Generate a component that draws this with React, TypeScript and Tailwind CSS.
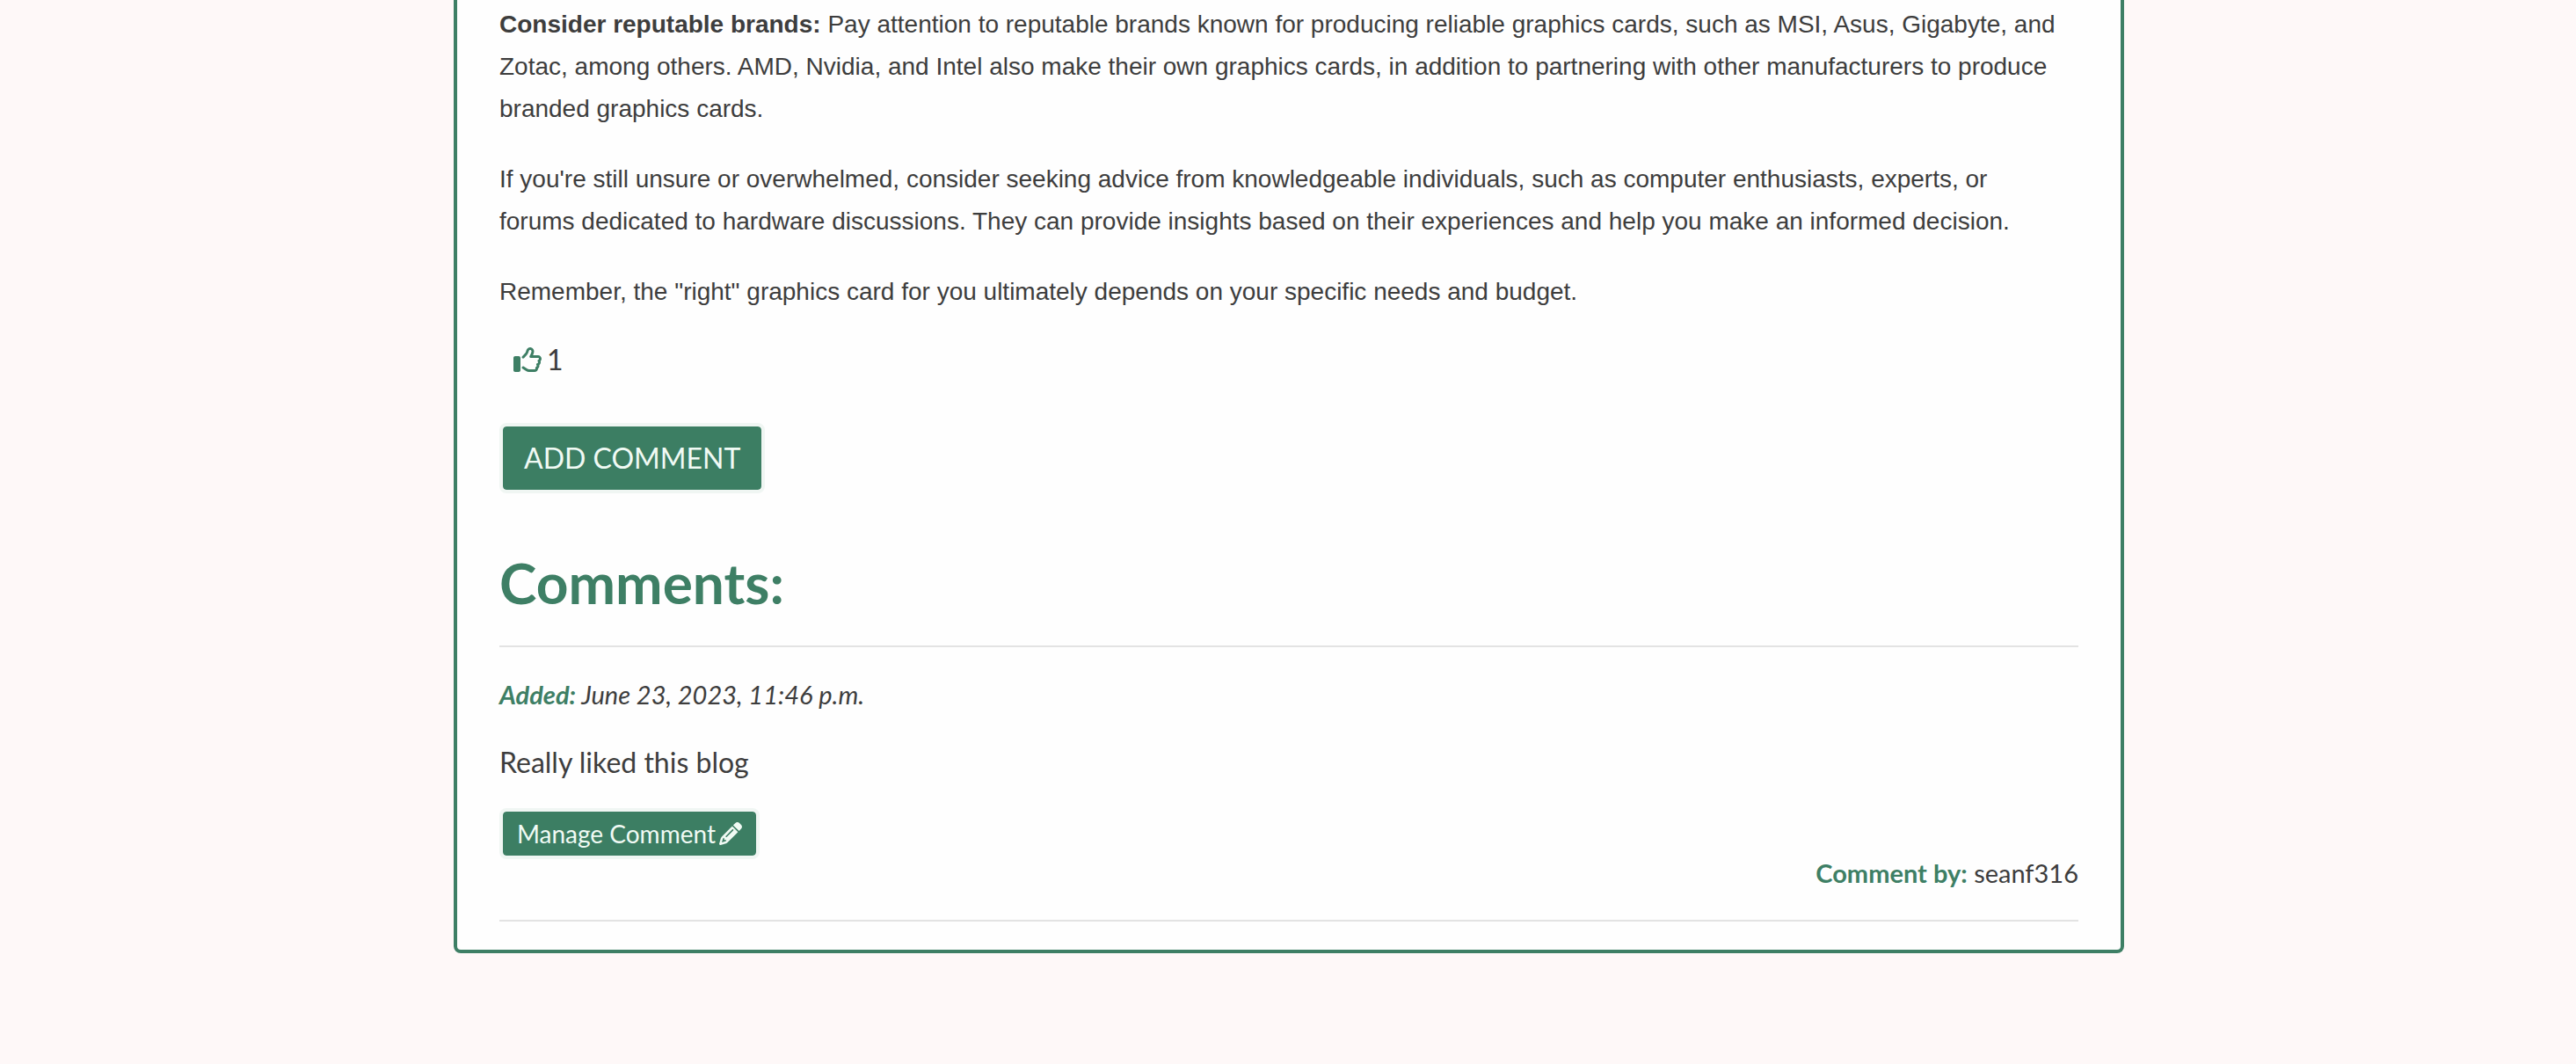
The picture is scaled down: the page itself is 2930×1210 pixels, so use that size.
import { FaPencil, FaRegThumbsUp } from "react-icons/fa6";

function Rule() {
  return <hr className="h-0 border-0 border-t-2 border-solid border-[#e3e3e3]" />;
}

function Article() {
  return (
    <div className="flex flex-col gap-8 font-['Liberation_Sans',Arial,sans-serif] text-[28px] leading-[48px]">
      <p>
        <strong className="font-bold">Consider reputable brands:</strong> Pay attention to reputable
        brands known for producing reliable graphics cards, such as MSI, Asus, Gigabyte, and Zotac,
        among others. AMD, Nvidia, and Intel also make their own graphics cards, in addition to
        partnering with other manufacturers to produce branded graphics cards.
      </p>
      <p>
        If you're still unsure or overwhelmed, consider seeking advice from knowledgeable
        individuals, such as computer enthusiasts, experts, or
        <br />
        forums dedicated to hardware discussions. They can provide insights based on their
        experiences and help you make an informed decision.
      </p>
      <p>Remember, the "right" graphics card for you ultimately depends on your specific needs and budget.</p>
    </div>
  );
}

function Comment() {
  return (
    <article className="flex flex-col items-start">
      <p className="mt-8 text-[29px] leading-[43px] italic">
        <strong className="font-bold text-[#3e7f65]">Added:</strong> June 23, 2023, 11:46 p.m.
      </p>
      <p className="mt-8 text-[32px] leading-[48px]">Really liked this blog</p>
      <button
        type="button"
        className="mt-7 flex items-center gap-1 rounded-lg border-4 border-[#f0f6f3] bg-[#3c7e63] bg-clip-padding px-4 py-1 text-[28px] leading-[42px] text-[#f0faf4]"
      >
        Manage Comment
        <FaPencil aria-hidden="true" className="size-[26px]" />
      </button>
      <p className="-mt-1.5 self-end text-[29px] leading-[43px]">
        <strong className="font-bold text-[#3e7f65]">Comment by:</strong> seanf316
      </p>
    </article>
  );
}

export default function App() {
  return (
    <main className="min-h-screen bg-[#fef8f8] pl-0.5 font-[Lato,sans-serif] text-[#3d3d3d]">
      <section className="mx-auto w-full max-w-[1900px] rounded-b-lg border-4 border-t-0 border-[#3e7f65] bg-[#fefefe] px-12 pt-1 pb-8">
        <Article />
        <div className="mt-[29px] flex px-4">
          <button type="button" aria-label="Like, 1 like" className="flex items-center gap-1.5 text-[32px] leading-[48px]">
            <FaRegThumbsUp aria-hidden="true" className="size-8 text-[#3e7f65]" />1
          </button>
        </div>
        <button
          type="button"
          className="mt-12 block rounded-lg border-4 border-[#f0f6f3] bg-[#3c7e63] bg-clip-padding px-6 py-3 text-[32px] leading-[48px] text-[#f0faf4]"
        >
          ADD COMMENT
        </button>
        <h2 className="mt-[63px] mb-[33px] text-[64px] leading-[77px] font-bold text-[#3e7f65]">Comments:</h2>
        <Rule />
        <Comment />
        <div className="mt-8">
          <Rule />
        </div>
      </section>
    </main>
  );
}
